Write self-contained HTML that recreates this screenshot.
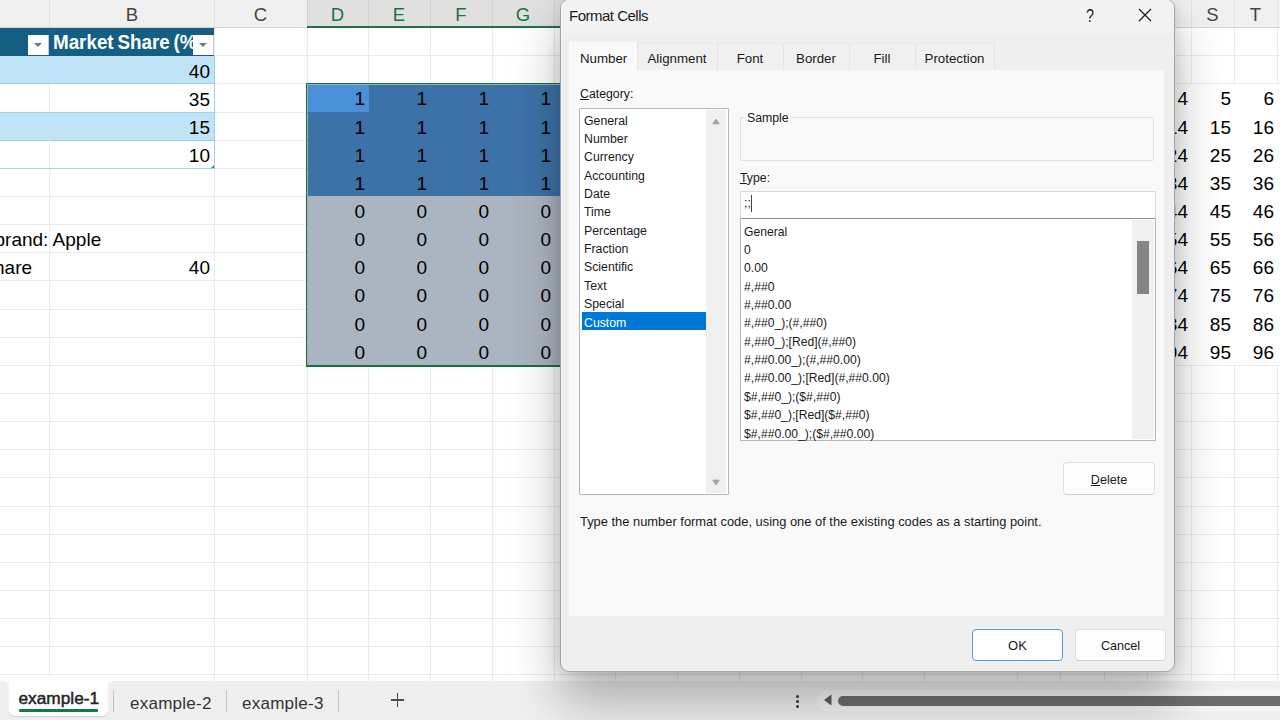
<!DOCTYPE html><html><head><meta charset="utf-8"><style>

*{box-sizing:border-box;margin:0;padding:0}
html,body{width:1280px;height:720px;overflow:hidden;background:#fff;font-family:"Liberation Sans",sans-serif;position:relative}
.abs{position:absolute}
.hl{position:absolute;height:1px;background:#ebebeb}
.vl{position:absolute;width:1px;background:#ebebeb}
.t{position:absolute;white-space:pre;line-height:1}

</style></head><body>
<div class="abs" style="left:0;top:0;width:1280px;height:27px;background:#f0f0f0"></div>
<div class="abs" style="left:307px;top:0;width:400px;height:27px;background:#e0e0e0"></div>
<div class="hl" style="left:0;top:27px;width:1280px;background:#d3d3d3"></div>
<div class="vl" style="left:49px;top:0;height:27px;background:#e2e2e2"></div>
<div class="vl" style="left:214px;top:0;height:27px;background:#e2e2e2"></div>
<div class="vl" style="left:1147px;top:0;height:27px;background:#e2e2e2"></div>
<div class="vl" style="left:1191px;top:0;height:27px;background:#e2e2e2"></div>
<div class="vl" style="left:1234px;top:0;height:27px;background:#e2e2e2"></div>
<div class="vl" style="left:1277px;top:0;height:27px;background:#e2e2e2"></div>
<div class="vl" style="left:307px;top:0;height:27px;background:#d2d2d2"></div>
<div class="vl" style="left:368px;top:0;height:27px;background:#d2d2d2"></div>
<div class="vl" style="left:430px;top:0;height:27px;background:#d2d2d2"></div>
<div class="vl" style="left:492px;top:0;height:27px;background:#d2d2d2"></div>
<div class="vl" style="left:554px;top:0;height:27px;background:#d2d2d2"></div>
<div class="vl" style="left:615px;top:0;height:27px;background:#d2d2d2"></div>
<div class="abs" style="left:307px;top:26px;width:400px;height:2px;background:#1e7145"></div>
<div class="t" style="left:50px;top:5.7px;width:164px;text-align:center;font-size:18.5px;color:#454545">B</div>
<div class="t" style="left:214px;top:5.7px;width:93px;text-align:center;font-size:18.5px;color:#454545">C</div>
<div class="t" style="left:307px;top:5.7px;width:61px;text-align:center;font-size:18.5px;color:#1e7145">D</div>
<div class="t" style="left:368px;top:5.7px;width:62px;text-align:center;font-size:18.5px;color:#1e7145">E</div>
<div class="t" style="left:430px;top:5.7px;width:62px;text-align:center;font-size:18.5px;color:#1e7145">F</div>
<div class="t" style="left:492px;top:5.7px;width:62px;text-align:center;font-size:18.5px;color:#1e7145">G</div>
<div class="t" style="left:554px;top:5.7px;width:62px;text-align:center;font-size:18.5px;color:#1e7145">H</div>
<div class="t" style="left:1148px;top:5.7px;width:43px;text-align:center;font-size:18.5px;color:#454545">R</div>
<div class="t" style="left:1191px;top:5.7px;width:43px;text-align:center;font-size:18.5px;color:#454545">S</div>
<div class="t" style="left:1234px;top:5.7px;width:43px;text-align:center;font-size:18.5px;color:#454545">T</div>
<div class="hl" style="left:0;top:55px;width:1280px"></div>
<div class="hl" style="left:0;top:83px;width:1280px"></div>
<div class="hl" style="left:0;top:112px;width:1280px"></div>
<div class="hl" style="left:0;top:140px;width:1280px"></div>
<div class="hl" style="left:0;top:168px;width:1280px"></div>
<div class="hl" style="left:0;top:196px;width:1280px"></div>
<div class="hl" style="left:0;top:224px;width:1280px"></div>
<div class="hl" style="left:0;top:252px;width:1280px"></div>
<div class="hl" style="left:0;top:280px;width:1280px"></div>
<div class="hl" style="left:0;top:309px;width:1280px"></div>
<div class="hl" style="left:0;top:337px;width:1280px"></div>
<div class="hl" style="left:0;top:365px;width:1280px"></div>
<div class="hl" style="left:0;top:393px;width:1280px"></div>
<div class="hl" style="left:0;top:421px;width:1280px"></div>
<div class="hl" style="left:0;top:449px;width:1280px"></div>
<div class="hl" style="left:0;top:477px;width:1280px"></div>
<div class="hl" style="left:0;top:506px;width:1280px"></div>
<div class="hl" style="left:0;top:534px;width:1280px"></div>
<div class="hl" style="left:0;top:562px;width:1280px"></div>
<div class="hl" style="left:0;top:590px;width:1280px"></div>
<div class="hl" style="left:0;top:618px;width:1280px"></div>
<div class="hl" style="left:0;top:646px;width:1280px"></div>
<div class="hl" style="left:0;top:674px;width:1280px"></div>
<div class="vl" style="left:49px;top:28px;height:653px"></div>
<div class="vl" style="left:214px;top:28px;height:653px"></div>
<div class="vl" style="left:307px;top:28px;height:653px"></div>
<div class="vl" style="left:368px;top:28px;height:653px"></div>
<div class="vl" style="left:430px;top:28px;height:653px"></div>
<div class="vl" style="left:492px;top:28px;height:653px"></div>
<div class="vl" style="left:554px;top:28px;height:653px"></div>
<div class="vl" style="left:615px;top:28px;height:653px"></div>
<div class="vl" style="left:677px;top:28px;height:653px"></div>
<div class="vl" style="left:739px;top:28px;height:653px"></div>
<div class="vl" style="left:801px;top:28px;height:653px"></div>
<div class="vl" style="left:862px;top:28px;height:653px"></div>
<div class="vl" style="left:924px;top:28px;height:653px"></div>
<div class="vl" style="left:1017px;top:28px;height:653px"></div>
<div class="vl" style="left:1060px;top:28px;height:653px"></div>
<div class="vl" style="left:1104px;top:28px;height:653px"></div>
<div class="vl" style="left:1147px;top:28px;height:653px"></div>
<div class="vl" style="left:1191px;top:28px;height:653px"></div>
<div class="vl" style="left:1234px;top:28px;height:653px"></div>
<div class="vl" style="left:1277px;top:28px;height:653px"></div>
<div class="abs" style="left:0;top:28px;width:214px;height:28px;background:#156082"></div>
<div class="abs" style="left:0;top:56px;width:214px;height:28px;background:#c0e4f5"></div>
<div class="abs" style="left:0;top:84px;width:214px;height:28px;background:#fff"></div>
<div class="abs" style="left:0;top:112px;width:214px;height:28px;background:#c0e4f5"></div>
<div class="abs" style="left:0;top:140px;width:214px;height:28px;background:#fff"></div>
<div class="hl" style="left:0;top:83px;width:215px;background:#96d3f0"></div>
<div class="hl" style="left:0;top:112px;width:215px;background:#96d3f0"></div>
<div class="hl" style="left:0;top:140px;width:215px;background:#96d3f0"></div>
<div class="hl" style="left:0;top:168px;width:215px;background:#96d3f0"></div>
<div class="vl" style="left:49px;top:84px;height:28px"></div>
<div class="vl" style="left:49px;top:140px;height:28px"></div>
<div class="vl" style="left:214px;top:56px;height:113px;background:#96d3f0"></div>
<div class="t" style="left:53px;top:32px;font-size:20px;font-weight:bold;transform:scaleX(0.94);transform-origin:left;word-spacing:-1.5px;color:#fff">Market Share (%</div>
<div class="abs" style="left:28px;top:35px;width:21px;height:20px;background:#fff;border-right:1px solid #c8c8c8"></div>
<div class="abs" style="left:34px;top:43px;width:0;height:0;border-left:4px solid transparent;border-right:4px solid transparent;border-top:4px solid #767676"></div>
<div class="abs" style="left:193px;top:35px;width:21px;height:20px;background:#fff;border-right:1px solid #c8c8c8"></div>
<div class="abs" style="left:199px;top:43px;width:0;height:0;border-left:4px solid transparent;border-right:4px solid transparent;border-top:4px solid #767676"></div>
<div class="t" style="left:10px;top:61.6px;width:200px;text-align:right;font-size:19px;color:#000;">40</div>
<div class="t" style="left:10px;top:89.6px;width:200px;text-align:right;font-size:19px;color:#000;">35</div>
<div class="t" style="left:10px;top:117.6px;width:200px;text-align:right;font-size:19px;color:#000;">15</div>
<div class="t" style="left:10px;top:145.6px;width:200px;text-align:right;font-size:19px;color:#000;">10</div>
<div class="abs" style="left:211px;top:165px;width:0;height:0;border-left:3px solid transparent;border-bottom:3px solid #3b6fd0"></div>
<div class="t" style="left:-5.5px;top:229.9px;font-size:19px;color:#000">brand: Apple</div>
<div class="t" style="left:-6px;top:257.5px;font-size:19px;color:#000">hare</div>
<div class="t" style="left:10px;top:257.5px;width:200px;text-align:right;font-size:19px;color:#000;">40</div>
<div class="abs" style="left:307px;top:84px;width:400px;height:112px;background:#3d72a8"></div>
<div class="abs" style="left:307px;top:196px;width:400px;height:169px;background:#abb5c1"></div>
<div class="abs" style="left:307px;top:84px;width:62px;height:28px;background:#4a90d9"></div>
<div class="abs" style="left:306px;top:83px;width:400px;height:284px;border:1px solid #1b6e42;border-bottom-width:2px"></div>
<div class="abs" style="left:307px;top:84px;width:398px;height:281px;border-top:1px solid #8fb9a4;border-left:1px solid #8fb9a4"></div>
<div class="t" style="left:165px;top:88.9px;width:200px;text-align:right;font-size:19px;color:#000;">1</div>
<div class="t" style="left:227px;top:88.9px;width:200px;text-align:right;font-size:19px;color:#000;">1</div>
<div class="t" style="left:289px;top:88.9px;width:200px;text-align:right;font-size:19px;color:#000;">1</div>
<div class="t" style="left:351px;top:88.9px;width:200px;text-align:right;font-size:19px;color:#000;">1</div>
<div class="t" style="left:413px;top:88.9px;width:200px;text-align:right;font-size:19px;color:#000;">1</div>
<div class="t" style="left:475px;top:88.9px;width:200px;text-align:right;font-size:19px;color:#000;">1</div>
<div class="t" style="left:165px;top:117.9px;width:200px;text-align:right;font-size:19px;color:#000;">1</div>
<div class="t" style="left:227px;top:117.9px;width:200px;text-align:right;font-size:19px;color:#000;">1</div>
<div class="t" style="left:289px;top:117.9px;width:200px;text-align:right;font-size:19px;color:#000;">1</div>
<div class="t" style="left:351px;top:117.9px;width:200px;text-align:right;font-size:19px;color:#000;">1</div>
<div class="t" style="left:413px;top:117.9px;width:200px;text-align:right;font-size:19px;color:#000;">1</div>
<div class="t" style="left:475px;top:117.9px;width:200px;text-align:right;font-size:19px;color:#000;">1</div>
<div class="t" style="left:165px;top:145.9px;width:200px;text-align:right;font-size:19px;color:#000;">1</div>
<div class="t" style="left:227px;top:145.9px;width:200px;text-align:right;font-size:19px;color:#000;">1</div>
<div class="t" style="left:289px;top:145.9px;width:200px;text-align:right;font-size:19px;color:#000;">1</div>
<div class="t" style="left:351px;top:145.9px;width:200px;text-align:right;font-size:19px;color:#000;">1</div>
<div class="t" style="left:413px;top:145.9px;width:200px;text-align:right;font-size:19px;color:#000;">1</div>
<div class="t" style="left:475px;top:145.9px;width:200px;text-align:right;font-size:19px;color:#000;">1</div>
<div class="t" style="left:165px;top:173.9px;width:200px;text-align:right;font-size:19px;color:#000;">1</div>
<div class="t" style="left:227px;top:173.9px;width:200px;text-align:right;font-size:19px;color:#000;">1</div>
<div class="t" style="left:289px;top:173.9px;width:200px;text-align:right;font-size:19px;color:#000;">1</div>
<div class="t" style="left:351px;top:173.9px;width:200px;text-align:right;font-size:19px;color:#000;">1</div>
<div class="t" style="left:413px;top:173.9px;width:200px;text-align:right;font-size:19px;color:#000;">1</div>
<div class="t" style="left:475px;top:173.9px;width:200px;text-align:right;font-size:19px;color:#000;">1</div>
<div class="t" style="left:165px;top:201.9px;width:200px;text-align:right;font-size:19px;color:#000;">0</div>
<div class="t" style="left:227px;top:201.9px;width:200px;text-align:right;font-size:19px;color:#000;">0</div>
<div class="t" style="left:289px;top:201.9px;width:200px;text-align:right;font-size:19px;color:#000;">0</div>
<div class="t" style="left:351px;top:201.9px;width:200px;text-align:right;font-size:19px;color:#000;">0</div>
<div class="t" style="left:413px;top:201.9px;width:200px;text-align:right;font-size:19px;color:#000;">0</div>
<div class="t" style="left:475px;top:201.9px;width:200px;text-align:right;font-size:19px;color:#000;">0</div>
<div class="t" style="left:165px;top:229.9px;width:200px;text-align:right;font-size:19px;color:#000;">0</div>
<div class="t" style="left:227px;top:229.9px;width:200px;text-align:right;font-size:19px;color:#000;">0</div>
<div class="t" style="left:289px;top:229.9px;width:200px;text-align:right;font-size:19px;color:#000;">0</div>
<div class="t" style="left:351px;top:229.9px;width:200px;text-align:right;font-size:19px;color:#000;">0</div>
<div class="t" style="left:413px;top:229.9px;width:200px;text-align:right;font-size:19px;color:#000;">0</div>
<div class="t" style="left:475px;top:229.9px;width:200px;text-align:right;font-size:19px;color:#000;">0</div>
<div class="t" style="left:165px;top:257.9px;width:200px;text-align:right;font-size:19px;color:#000;">0</div>
<div class="t" style="left:227px;top:257.9px;width:200px;text-align:right;font-size:19px;color:#000;">0</div>
<div class="t" style="left:289px;top:257.9px;width:200px;text-align:right;font-size:19px;color:#000;">0</div>
<div class="t" style="left:351px;top:257.9px;width:200px;text-align:right;font-size:19px;color:#000;">0</div>
<div class="t" style="left:413px;top:257.9px;width:200px;text-align:right;font-size:19px;color:#000;">0</div>
<div class="t" style="left:475px;top:257.9px;width:200px;text-align:right;font-size:19px;color:#000;">0</div>
<div class="t" style="left:165px;top:285.9px;width:200px;text-align:right;font-size:19px;color:#000;">0</div>
<div class="t" style="left:227px;top:285.9px;width:200px;text-align:right;font-size:19px;color:#000;">0</div>
<div class="t" style="left:289px;top:285.9px;width:200px;text-align:right;font-size:19px;color:#000;">0</div>
<div class="t" style="left:351px;top:285.9px;width:200px;text-align:right;font-size:19px;color:#000;">0</div>
<div class="t" style="left:413px;top:285.9px;width:200px;text-align:right;font-size:19px;color:#000;">0</div>
<div class="t" style="left:475px;top:285.9px;width:200px;text-align:right;font-size:19px;color:#000;">0</div>
<div class="t" style="left:165px;top:314.9px;width:200px;text-align:right;font-size:19px;color:#000;">0</div>
<div class="t" style="left:227px;top:314.9px;width:200px;text-align:right;font-size:19px;color:#000;">0</div>
<div class="t" style="left:289px;top:314.9px;width:200px;text-align:right;font-size:19px;color:#000;">0</div>
<div class="t" style="left:351px;top:314.9px;width:200px;text-align:right;font-size:19px;color:#000;">0</div>
<div class="t" style="left:413px;top:314.9px;width:200px;text-align:right;font-size:19px;color:#000;">0</div>
<div class="t" style="left:475px;top:314.9px;width:200px;text-align:right;font-size:19px;color:#000;">0</div>
<div class="t" style="left:165px;top:342.9px;width:200px;text-align:right;font-size:19px;color:#000;">0</div>
<div class="t" style="left:227px;top:342.9px;width:200px;text-align:right;font-size:19px;color:#000;">0</div>
<div class="t" style="left:289px;top:342.9px;width:200px;text-align:right;font-size:19px;color:#000;">0</div>
<div class="t" style="left:351px;top:342.9px;width:200px;text-align:right;font-size:19px;color:#000;">0</div>
<div class="t" style="left:413px;top:342.9px;width:200px;text-align:right;font-size:19px;color:#000;">0</div>
<div class="t" style="left:475px;top:342.9px;width:200px;text-align:right;font-size:19px;color:#000;">0</div>
<div class="abs" style="left:1148px;top:84px;width:132px;height:281px;background:#fff"></div>
<div class="t" style="left:988px;top:88.9px;width:200px;text-align:right;font-size:19px;color:#000;">4</div>
<div class="t" style="left:1031px;top:88.9px;width:200px;text-align:right;font-size:19px;color:#000;">5</div>
<div class="t" style="left:1074px;top:88.9px;width:200px;text-align:right;font-size:19px;color:#000;">6</div>
<div class="t" style="left:988px;top:117.9px;width:200px;text-align:right;font-size:19px;color:#000;">14</div>
<div class="t" style="left:1031px;top:117.9px;width:200px;text-align:right;font-size:19px;color:#000;">15</div>
<div class="t" style="left:1074px;top:117.9px;width:200px;text-align:right;font-size:19px;color:#000;">16</div>
<div class="t" style="left:988px;top:145.9px;width:200px;text-align:right;font-size:19px;color:#000;">24</div>
<div class="t" style="left:1031px;top:145.9px;width:200px;text-align:right;font-size:19px;color:#000;">25</div>
<div class="t" style="left:1074px;top:145.9px;width:200px;text-align:right;font-size:19px;color:#000;">26</div>
<div class="t" style="left:988px;top:173.9px;width:200px;text-align:right;font-size:19px;color:#000;">34</div>
<div class="t" style="left:1031px;top:173.9px;width:200px;text-align:right;font-size:19px;color:#000;">35</div>
<div class="t" style="left:1074px;top:173.9px;width:200px;text-align:right;font-size:19px;color:#000;">36</div>
<div class="t" style="left:988px;top:201.9px;width:200px;text-align:right;font-size:19px;color:#000;">44</div>
<div class="t" style="left:1031px;top:201.9px;width:200px;text-align:right;font-size:19px;color:#000;">45</div>
<div class="t" style="left:1074px;top:201.9px;width:200px;text-align:right;font-size:19px;color:#000;">46</div>
<div class="t" style="left:988px;top:229.9px;width:200px;text-align:right;font-size:19px;color:#000;">54</div>
<div class="t" style="left:1031px;top:229.9px;width:200px;text-align:right;font-size:19px;color:#000;">55</div>
<div class="t" style="left:1074px;top:229.9px;width:200px;text-align:right;font-size:19px;color:#000;">56</div>
<div class="t" style="left:988px;top:257.9px;width:200px;text-align:right;font-size:19px;color:#000;">64</div>
<div class="t" style="left:1031px;top:257.9px;width:200px;text-align:right;font-size:19px;color:#000;">65</div>
<div class="t" style="left:1074px;top:257.9px;width:200px;text-align:right;font-size:19px;color:#000;">66</div>
<div class="t" style="left:988px;top:285.9px;width:200px;text-align:right;font-size:19px;color:#000;">74</div>
<div class="t" style="left:1031px;top:285.9px;width:200px;text-align:right;font-size:19px;color:#000;">75</div>
<div class="t" style="left:1074px;top:285.9px;width:200px;text-align:right;font-size:19px;color:#000;">76</div>
<div class="t" style="left:988px;top:314.9px;width:200px;text-align:right;font-size:19px;color:#000;">84</div>
<div class="t" style="left:1031px;top:314.9px;width:200px;text-align:right;font-size:19px;color:#000;">85</div>
<div class="t" style="left:1074px;top:314.9px;width:200px;text-align:right;font-size:19px;color:#000;">86</div>
<div class="t" style="left:988px;top:342.9px;width:200px;text-align:right;font-size:19px;color:#000;">94</div>
<div class="t" style="left:1031px;top:342.9px;width:200px;text-align:right;font-size:19px;color:#000;">95</div>
<div class="t" style="left:1074px;top:342.9px;width:200px;text-align:right;font-size:19px;color:#000;">96</div>
<div class="abs" style="left:0;top:695px;width:1280px;height:25px;background:#efefef"></div>
<div class="abs" style="left:9px;top:676px;width:99px;height:40px;background:#fff;border-radius:0 0 6px 6px;box-shadow:0 1px 1.5px rgba(0,0,0,0.14)"></div>
<div class="abs" style="left:-20px;top:681px;width:29px;height:50px;background:#efefef;border-radius:0 6px 0 0"></div>
<div class="abs" style="left:108px;top:681px;width:1200px;height:50px;background:#efefef;border-radius:6px 0 0 0"></div>
<div class="t" style="left:18.5px;top:689.9px;font-size:17.3px;color:#262626;-webkit-text-stroke:0.5px #262626;letter-spacing:0px">example-1</div>
<div class="abs" style="left:19px;top:709px;width:79px;height:3px;border-radius:1px;background:#107c41"></div>
<div class="abs" style="left:113px;top:690px;width:1px;height:22px;background:#c4c4c4"></div>
<div class="abs" style="left:226px;top:690px;width:1px;height:22px;background:#c4c4c4"></div>
<div class="abs" style="left:338px;top:690px;width:1px;height:22px;background:#c4c4c4"></div>
<div class="t" style="left:130px;top:694.8px;font-size:17px;letter-spacing:0.25px;color:#333">example-2</div>
<div class="t" style="left:242px;top:694.8px;font-size:17px;letter-spacing:0.25px;color:#333">example-3</div>
<div class="abs" style="left:390.5px;top:699.3px;width:13.5px;height:1.6px;background:#4d4d4d"></div>
<div class="abs" style="left:396.7px;top:693px;width:1.6px;height:14px;background:#4d4d4d"></div>
<div class="abs" style="left:796.3px;top:695.0px;width:3px;height:3px;border-radius:50%;background:#3a3a3a"></div>
<div class="abs" style="left:796.3px;top:699.8px;width:3px;height:3px;border-radius:50%;background:#3a3a3a"></div>
<div class="abs" style="left:796.3px;top:704.6px;width:3px;height:3px;border-radius:50%;background:#3a3a3a"></div>
<div class="abs" style="left:817px;top:690px;width:470px;height:21px;border-radius:10px;background:rgba(255,255,255,0.4)"></div>
<svg class="abs" style="left:823px;top:694px" width="10" height="12" viewBox="0 0 10 12"><path d="M8.5 1.2 L8.5 10.8 Q8.5 11.6 7.8 11.1 L1.6 6.6 Q1 6 1.6 5.4 L7.8 0.9 Q8.5 0.4 8.5 1.2Z" fill="#5e5e5e"/></svg>
<div class="abs" style="left:838px;top:695.5px;width:460px;height:10px;border-radius:5px;background:#6e6e6e"></div>
<div class="abs" style="left:560px;top:-1px;width:615px;height:673px;background:#efefef;border:1px solid #a6a6a6;border-radius:9px;box-shadow:0 30px 50px rgba(0,0,0,0.28),0 0 16px rgba(0,0,0,0.12)"></div>
<div class="abs" style="left:561px;top:0;width:613px;height:33px;background:#f3f3f3;border-radius:8px 8px 0 0"></div>
<div class="t" style="left:569px;top:8px;font-size:15px;letter-spacing:-0.5px;color:#1a1a1a">Format Cells</div>
<div class="t" style="left:1085.5px;top:7.2px;font-size:18px;transform:scaleX(0.8);transform-origin:left;color:#1a1a1a">?</div>
<svg class="abs" style="left:1138px;top:8px" width="14" height="14" viewBox="0 0 14 14"><path d="M1 1L13 13M13 1L1 13" stroke="#1a1a1a" stroke-width="1.2"/></svg>
<div class="abs" style="left:569px;top:70px;width:595px;height:546px;background:#f9f9f9"></div>
<div class="abs" style="left:569px;top:42px;width:68px;height:29px;background:#f9f9f9"></div>
<div class="abs" style="left:637px;top:43px;width:80px;height:27px;background:#f0f0f0;border-left:1px solid #e4e4e4;border-top:1px solid #e8e8e8"></div>
<div class="t" style="left:637px;top:51.5px;width:80px;text-align:center;font-size:13.3px;color:#1a1a1a">Alignment</div>
<div class="abs" style="left:717px;top:43px;width:66px;height:27px;background:#f0f0f0;border-left:1px solid #e4e4e4;border-top:1px solid #e8e8e8"></div>
<div class="t" style="left:717px;top:51.5px;width:66px;text-align:center;font-size:13.3px;color:#1a1a1a">Font</div>
<div class="abs" style="left:783px;top:43px;width:66px;height:27px;background:#f0f0f0;border-left:1px solid #e4e4e4;border-top:1px solid #e8e8e8"></div>
<div class="t" style="left:783px;top:51.5px;width:66px;text-align:center;font-size:13.3px;color:#1a1a1a">Border</div>
<div class="abs" style="left:849px;top:43px;width:66px;height:27px;background:#f0f0f0;border-left:1px solid #e4e4e4;border-top:1px solid #e8e8e8"></div>
<div class="t" style="left:849px;top:51.5px;width:66px;text-align:center;font-size:13.3px;color:#1a1a1a">Fill</div>
<div class="abs" style="left:915px;top:43px;width:79px;height:27px;background:#f0f0f0;border-left:1px solid #e4e4e4;border-top:1px solid #e8e8e8"></div>
<div class="t" style="left:915px;top:51.5px;width:79px;text-align:center;font-size:13.3px;color:#1a1a1a">Protection</div>
<div class="abs" style="left:994px;top:43px;width:1px;height:27px;background:#e4e4e4"></div>
<div class="t" style="left:580px;top:51.5px;font-size:13.3px;color:#1a1a1a">Number</div>
<div class="t" style="left:580px;top:88px;font-size:12.3px;color:#1a1a1a"><u>C</u>ategory:</div>
<div class="abs" style="left:579px;top:108px;width:150px;height:387px;background:#fff;border:1px solid #b3b6bd;border-radius:1px"></div>
<div class="abs" style="left:706px;top:110px;width:20px;height:383px;background:#f0f0f0"></div>
<svg class="abs" style="left:712px;top:118px" width="8" height="7" viewBox="0 0 8 7"><path d="M4 1.2 L7.2 5.8 L0.8 5.8Z" fill="#a3a3a3" stroke="#a3a3a3" stroke-width="1" stroke-linejoin="round"/></svg>
<svg class="abs" style="left:712px;top:479px" width="8" height="7" viewBox="0 0 8 7"><path d="M4 5.8 L7.2 1.2 L0.8 1.2Z" fill="#a3a3a3" stroke="#a3a3a3" stroke-width="1" stroke-linejoin="round"/></svg>
<div class="abs" style="left:582px;top:312px;width:124px;height:18px;background:#0078d7"></div>
<div class="t" style="left:584px;top:114.5px;font-size:12.3px;color:#1a1a1a">General</div>
<div class="t" style="left:584px;top:132.9px;font-size:12.3px;color:#1a1a1a">Number</div>
<div class="t" style="left:584px;top:151.2px;font-size:12.3px;color:#1a1a1a">Currency</div>
<div class="t" style="left:584px;top:169.6px;font-size:12.3px;color:#1a1a1a">Accounting</div>
<div class="t" style="left:584px;top:187.9px;font-size:12.3px;color:#1a1a1a">Date</div>
<div class="t" style="left:584px;top:206.3px;font-size:12.3px;color:#1a1a1a">Time</div>
<div class="t" style="left:584px;top:224.7px;font-size:12.3px;color:#1a1a1a">Percentage</div>
<div class="t" style="left:584px;top:243.0px;font-size:12.3px;color:#1a1a1a">Fraction</div>
<div class="t" style="left:584px;top:261.4px;font-size:12.3px;color:#1a1a1a">Scientific</div>
<div class="t" style="left:584px;top:279.7px;font-size:12.3px;color:#1a1a1a">Text</div>
<div class="t" style="left:584px;top:298.1px;font-size:12.3px;color:#1a1a1a">Special</div>
<div class="t" style="left:584px;top:316.5px;font-size:12.3px;color:#fff">Custom</div>
<div class="abs" style="left:740px;top:117px;width:414px;height:44px;border:1px solid #e0e0e0;border-radius:2px"></div>
<div class="abs" style="left:745px;top:110px;width:46px;height:12px;background:#f9f9f9"></div>
<div class="t" style="left:747px;top:112px;font-size:12.3px;color:#1a1a1a">Sample</div>
<div class="t" style="left:740px;top:172px;font-size:12.3px;color:#1a1a1a"><u>T</u>ype:</div>
<div class="abs" style="left:740px;top:191px;width:416px;height:28px;background:#fff;border:1px solid #dadada;border-bottom:1px solid #8a8e98"></div>
<div class="t" style="left:744px;top:197px;font-size:12.3px;color:#1a1a1a">;;</div>
<div class="abs" style="left:751px;top:195px;width:1px;height:17px;background:#444"></div>
<div class="abs" style="left:740px;top:219px;width:416px;height:222px;background:#fff;border:1px solid #b4b6be;border-top:none"></div>
<div class="abs" style="left:1132px;top:220px;width:22px;height:219px;background:#f0f0f0"></div>
<div class="abs" style="left:1137px;top:241px;width:12px;height:53px;background:#858585"></div>
<div class="t" style="left:744px;top:225.5px;font-size:12.15px;color:#1a1a1a">General</div>
<div class="t" style="left:744px;top:243.9px;font-size:12.15px;color:#1a1a1a">0</div>
<div class="t" style="left:744px;top:262.2px;font-size:12.15px;color:#1a1a1a">0.00</div>
<div class="t" style="left:744px;top:280.6px;font-size:12.15px;color:#1a1a1a">#,##0</div>
<div class="t" style="left:744px;top:298.9px;font-size:12.15px;color:#1a1a1a">#,##0.00</div>
<div class="t" style="left:744px;top:317.3px;font-size:12.15px;color:#1a1a1a">#,##0_);(#,##0)</div>
<div class="t" style="left:744px;top:335.7px;font-size:12.15px;color:#1a1a1a">#,##0_);[Red](#,##0)</div>
<div class="t" style="left:744px;top:354.0px;font-size:12.15px;color:#1a1a1a">#,##0.00_);(#,##0.00)</div>
<div class="t" style="left:744px;top:372.4px;font-size:12.15px;color:#1a1a1a">#,##0.00_);[Red](#,##0.00)</div>
<div class="t" style="left:744px;top:390.7px;font-size:12.15px;color:#1a1a1a">$#,##0_);($#,##0)</div>
<div class="t" style="left:744px;top:409.1px;font-size:12.15px;color:#1a1a1a">$#,##0_);[Red]($#,##0)</div>
<div class="t" style="left:744px;top:427.5px;font-size:12.15px;color:#1a1a1a">$#,##0.00_);($#,##0.00)</div>
<div class="abs" style="left:1063px;top:462px;width:92px;height:33px;background:#fdfdfd;border:1px solid #dedede;border-bottom-color:#cfcfcf;border-radius:4px"></div>
<div class="t" style="left:1063px;top:473.5px;width:92px;text-align:center;font-size:12.6px;color:#1a1a1a"><u>D</u>elete</div>
<div class="t" style="left:580px;top:516px;font-size:12.9px;color:#1a1a1a">Type the number format code, using one of the existing codes as a starting point.</div>
<div class="abs" style="left:972px;top:629px;width:91px;height:32px;background:#fff;border:1px solid #5b9bd5;border-radius:4px"></div>
<div class="t" style="left:972px;top:639.2px;width:91px;text-align:center;font-size:13px;color:#1a1a1a">OK</div>
<div class="abs" style="left:1075px;top:629px;width:91px;height:32px;background:#fdfdfd;border:1px solid #dedede;border-bottom-color:#cfcfcf;border-radius:4px"></div>
<div class="t" style="left:1075px;top:640.2px;width:91px;text-align:center;font-size:12.6px;color:#1a1a1a">Cancel</div>
</body></html>
